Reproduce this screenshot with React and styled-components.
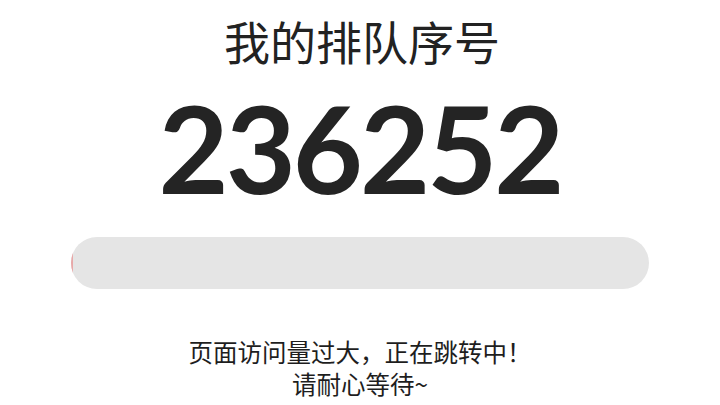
import React from "react";
import styled, { createGlobalStyle } from "styled-components";

const GlobalStyle = createGlobalStyle`
  html, body {
    margin: 0;
    padding: 0;
    background: #ffffff;
  }
  body {
    font-family: "Noto Sans CJK SC", "Noto Sans", sans-serif;
    color: #222222;
  }
`;

const Page = styled.div`
  width: 720px;
  height: 405px;
  display: flex;
  flex-direction: column;
  align-items: center;
  overflow: hidden;
`;

const Title = styled.h1`
  margin: 17px 0 0 4px;
  font-size: 46px;
  font-weight: 400;
  line-height: 1;
  color: #222222;
`;

const QueueNumber = styled.div`
  margin-top: 24px;
  font-family: Lato, "Liberation Sans", sans-serif;
  font-size: 121px;
  font-weight: 700;
  line-height: 1;
  letter-spacing: -3px;
  color: #242424;
`;

const Track = styled.div`
  margin-top: 29px;
  width: 578px;
  height: 52px;
  border-radius: 26px;
  background: #e5e5e5;
  overflow: hidden;
  display: flex;
`;

const Fill = styled.div`
  height: 100%;
  background: #e8a8a8;
`;

const Notice = styled.p`
  margin: 47px 0 0;
  font-size: 24.5px;
  line-height: 32px;
  text-align: center;
  color: #1e1e1e;
`;

const App = () => {
  const progress = 0.4;

  return (
    <>
      <GlobalStyle />
      <Page>
        <Title>我的排队序号</Title>
        <QueueNumber>236252</QueueNumber>
        <Track>
          <Fill style={{ width: `${progress}%` }} />
        </Track>
        <Notice>
          页面访问量过大，正在跳转中！
          <br />
          请耐心等待~
        </Notice>
      </Page>
    </>
  );
};

export default App;
